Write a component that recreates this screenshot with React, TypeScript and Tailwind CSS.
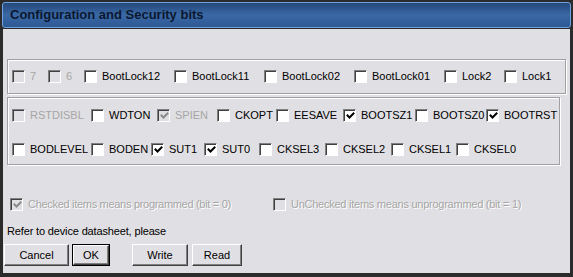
import * as React from "react";

type Bit = {
  label: string;
  w: number;
  checked?: boolean;
  disabled?: boolean;
};

const row1: Bit[] = [
  { label: "7", w: 36, disabled: true },
  { label: "6", w: 36, disabled: true },
  { label: "BootLock12", w: 90 },
  { label: "BootLock11", w: 90 },
  { label: "BootLock02", w: 90 },
  { label: "BootLock01", w: 90 },
  { label: "Lock2", w: 60 },
  { label: "Lock1", w: 50 },
];

const row2: Bit[] = [
  { label: "RSTDISBL", w: 79, disabled: true },
  { label: "WDTON", w: 66 },
  { label: "SPIEN", w: 60, checked: true, disabled: true },
  { label: "CKOPT", w: 59 },
  { label: "EESAVE", w: 67 },
  { label: "BOOTSZ1", w: 72, checked: true },
  { label: "BOOTSZ0", w: 71 },
  { label: "BOOTRST", w: 70, checked: true },
];

const row3: Bit[] = [
  { label: "BODLEVEL", w: 79 },
  { label: "BODEN", w: 60 },
  { label: "SUT1", w: 53, checked: true },
  { label: "SUT0", w: 55, checked: true },
  { label: "CKSEL3", w: 66 },
  { label: "CKSEL2", w: 66 },
  { label: "CKSEL1", w: 65 },
  { label: "CKSEL0", w: 60 },
];

const CheckBox = ({ checked, disabled }: { checked?: boolean; disabled?: boolean }) => (
  <span
    className={
      "flex h-[13px] w-[13px] shrink-0 items-center justify-center border border-t-[#808080] border-l-[#808080] border-r-[#ffffff] border-b-[#ffffff] shadow-[inset_1px_1px_0_#404040] " +
      (disabled ? "bg-[#e0dfe3]" : "bg-white")
    }
  >
    {checked && (
      <svg width="9" height="9" viewBox="0 0 9 9" className="ml-[1px] mt-[1px]">
        <path
          d="M1.5 3.5 L3.5 5.5 L7.5 1.5"
          fill="none"
          stroke={disabled ? "#8a8a8a" : "#000"}
          strokeWidth="2"
          strokeLinecap="square"
        />
      </svg>
    )}
  </span>
);

const BitItem = ({ bit }: { bit: Bit }) => (
  <div className="flex shrink-0 items-center" style={{ width: bit.w }}>
    <CheckBox checked={bit.checked} disabled={bit.disabled} />
    <span
      className={
        "ml-[5px] whitespace-nowrap leading-[13px] " +
        (bit.disabled ? "text-[#a6a6a6]" : "text-black")
      }
    >
      {bit.label}
    </span>
  </div>
);

const Button = ({
  children,
  w,
  isDefault,
  className,
}: {
  children: React.ReactNode;
  w: string;
  isDefault?: boolean;
  className?: string;
}) => (
  <div className={(isDefault ? "border border-black " : "") + w + " " + (className ?? "") + " h-[22px]"}>
    <button
      type="button"
      className="flex h-full w-full items-center justify-center border border-t-white border-l-white border-r-[#404040] border-b-[#404040] bg-[#e0dfe3] text-[11px] text-black shadow-[inset_-1px_-1px_0_#808080]"
    >
      {children}
    </button>
  </div>
);

const App = () => {
  return (
    <div
      className="flex h-[277px] w-[573px] flex-col bg-[#2b2b2b] px-[2px] pt-[2px] text-[11px]"
      style={{ fontFamily: '"Liberation Sans", Arial, sans-serif' }}
    >
      <div className="flex h-[26px] shrink-0 items-center rounded-[3px] border border-[#6fa2de] bg-gradient-to-b from-[#25487a] via-[#3a69a6] to-[#2d5894] pl-[7px]">
        <span className="text-[13px] font-bold text-[#0b1830]">Configuration and Security bits</span>
      </div>
      <div className="mx-[1px] mb-[4px] mt-[1px] flex flex-1 flex-col bg-[#e0dfe3] pl-[4px]">
        <div className="mt-[30px] flex h-[35px] w-[559px] items-center border border-[#a0a0a0] pl-[4px] shadow-[1px_1px_0_#fff,inset_1px_1px_0_#fff]">
          {row1.map((b) => (
            <BitItem key={b.label} bit={b} />
          ))}
        </div>
        <div className="mt-[3px] flex h-[68px] w-[553px] flex-col gap-[21px] border border-[#a0a0a0] pl-[4px] pt-[11px] shadow-[1px_1px_0_#fff,inset_1px_1px_0_#fff]">
          <div className="flex h-[13px] items-center">
            {row2.map((b) => (
              <BitItem key={b.label} bit={b} />
            ))}
          </div>
          <div className="flex h-[13px] items-center">
            {row3.map((b) => (
              <BitItem key={b.label} bit={b} />
            ))}
          </div>
        </div>
        <div className="mt-[33px] flex h-[13px] items-center pl-[3px]">
          <div className="flex w-[263px] items-center">
            <CheckBox checked disabled />
            <span className="ml-[5px] whitespace-nowrap tracking-[-0.3px] text-[#a6a6a6] [text-shadow:1px_1px_0_#fff]">
              Checked items means programmed (bit = 0)
            </span>
          </div>
          <div className="flex items-center">
            <CheckBox disabled />
            <span className="ml-[5px] whitespace-nowrap tracking-[-0.25px] text-[#a6a6a6] [text-shadow:1px_1px_0_#fff]">
              UnChecked items means unprogrammed (bit = 1)
            </span>
          </div>
        </div>
        <div className="mt-[14px] h-[13px] leading-[13px] tracking-[-0.15px] text-black">
          Refer to device datasheet, please
        </div>
        <div className="mt-[6px] flex items-center">
          <Button w="w-[65px]" className="-ml-[3px]">Cancel</Button>
          <Button w="w-[38px]" isDefault className="ml-[3px]">OK</Button>
          <Button w="w-[56px]" className="ml-[22px]">Write</Button>
          <Button w="w-[50px]" className="ml-[4px]">Read</Button>
        </div>
      </div>
    </div>
  );
};

export default App;
